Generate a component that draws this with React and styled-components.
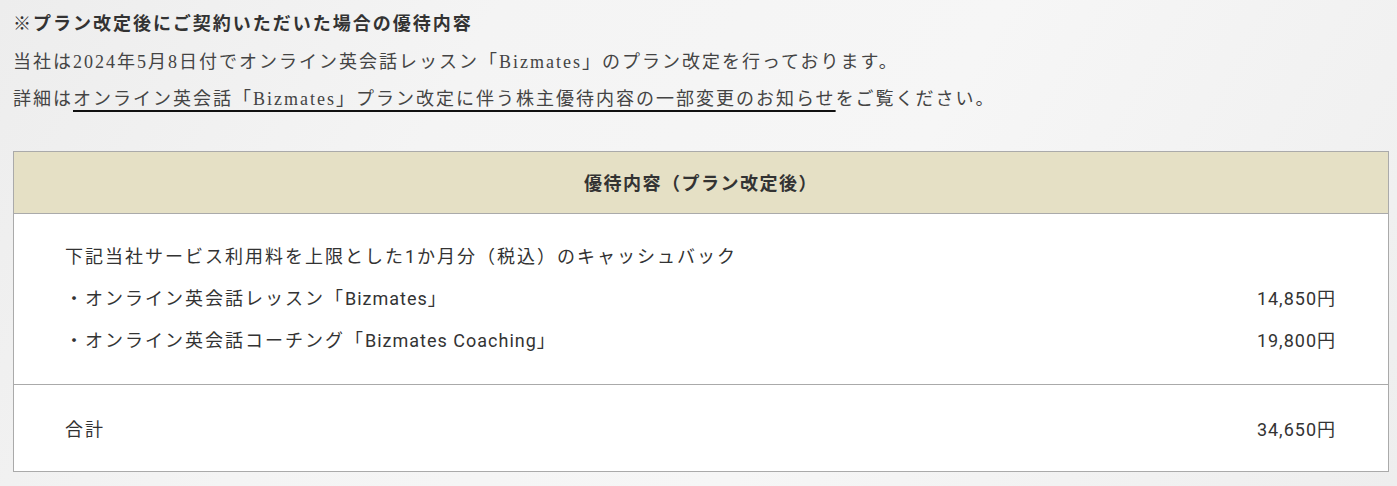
import React from 'react'
import styled, { createGlobalStyle } from 'styled-components'

const Global = createGlobalStyle`
  html, body { margin: 0; padding: 0; }
  body {
    background: linear-gradient(120deg, #ededed 0%, #f4f4f4 30%, #f6f6f6 60%, #eeeeee 100%);
    min-height: 486px;
  }
`

const Page = styled.div`
  padding: 6px 10px 14px 13px;
  color: #333;
`

const Notes = styled.div`
  font-family: "Liberation Serif", "Noto Sans CJK JP", serif;
  font-size: 18px;
  line-height: 37.5px;
  color: #444;
  letter-spacing: 2px;
  margin-bottom: 32px;

  p { margin: 0; }
  .title { font-weight: bold; color: #333; }
  a {
    color: #444;
    text-decoration: underline;
    text-decoration-color: #111;
    text-underline-offset: 5px;
    text-decoration-thickness: 2px;
  }
`

const Table = styled.div`
  width: 1374px;
  border: 1px solid #aaa;
  background: #fff;
  font-family: Roboto, "Noto Sans CJK JP", sans-serif;
  color: #333;
`

const Head = styled.div`
  background: #e5e0c5;
  height: 61px;
  border-bottom: 1px solid #aaa;
  display: flex;
  align-items: center;
  justify-content: center;
  font-size: 18px;
  font-weight: bold;
  letter-spacing: 1.5px;
`

const Section = styled.div`
  padding: ${p => p.$pad};
  border-top: ${p => (p.$divided ? '1px solid #aaa' : 'none')};
`

const Row = styled.div`
  display: flex;
  justify-content: space-between;
  align-items: center;
  height: 42px;
  font-size: 18px;
  letter-spacing: 2px;
`

const Latin = styled.span`
  letter-spacing: 1px;
`

export default function App() {
  return (
    <>
      <Global />
      <Page>
        <Notes>
          <p className="title">※プラン改定後にご契約いただいた場合の優待内容</p>
          <p>当社は2024年5月8日付でオンライン英会話レッスン「Bizmates」のプラン改定を行っております。</p>
          <p>詳細は<a href="#">オンライン英会話「Bizmates」プラン改定に伴う株主優待内容の一部変更のお知らせ</a>をご覧ください。</p>
        </Notes>
        <Table>
          <Head>優待内容（プラン改定後）</Head>
          <Section $pad="20px 51px 24px 51px">
            <Row>下記当社サービス利用料を上限とした1か月分（税込）のキャッシュバック</Row>
            <Row>
              <span>・オンライン英会話レッスン「<Latin>Bizmates</Latin>」</span>
              <span><Latin>14,850</Latin>円</span>
            </Row>
            <Row>
              <span>・オンライン英会話コーチング「<Latin>Bizmates Coaching</Latin>」</span>
              <span><Latin>19,800</Latin>円</span>
            </Row>
          </Section>
          <Section $divided $pad="22px 51px 22px 51px">
            <Row>
              <span>合計</span>
              <span><Latin>34,650</Latin>円</span>
            </Row>
          </Section>
        </Table>
      </Page>
    </>
  )
}
